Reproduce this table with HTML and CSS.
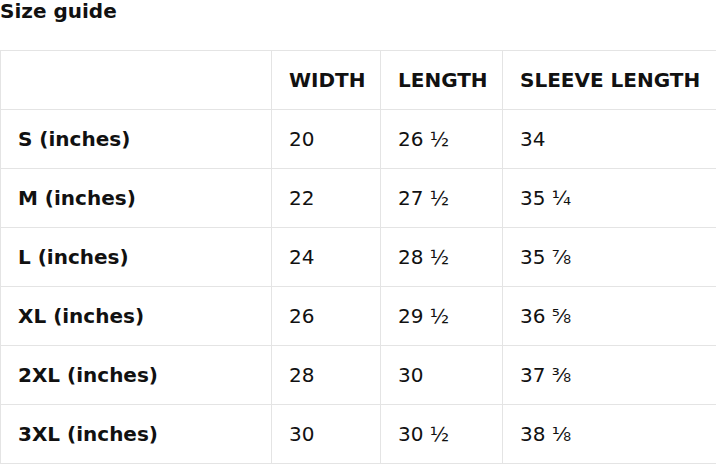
FILE: index.html
```html
<!DOCTYPE html>
<html>
<head>
<meta charset="utf-8">
<link rel="stylesheet" href="styles.css">
</head>
<body>
<h2 class="title">Size guide</h2>
<table class="sizes">
  <colgroup>
    <col class="c1"><col class="c2"><col class="c3"><col class="c4">
  </colgroup>
  <thead>
    <tr><th></th><th>WIDTH</th><th>LENGTH</th><th>SLEEVE LENGTH</th></tr>
  </thead>
  <tbody>
    <tr><th>S (inches)</th><td>20</td><td>26 ½</td><td>34</td></tr>
    <tr><th>M (inches)</th><td>22</td><td>27 ½</td><td>35 ¼</td></tr>
    <tr><th>L (inches)</th><td>24</td><td>28 ½</td><td>35 ⅞</td></tr>
    <tr><th>XL (inches)</th><td>26</td><td>29 ½</td><td>36 ⅝</td></tr>
    <tr><th>2XL (inches)</th><td>28</td><td>30</td><td>37 ⅜</td></tr>
    <tr><th>3XL (inches)</th><td>30</td><td>30 ½</td><td>38 ⅛</td></tr>
  </tbody>
</table>
</body>
</html>
```
FILE: styles.css
```css
html, body {
  margin: 0;
  padding: 0;
  background: #fff;
}
body {
  font-family: "DejaVu Sans", sans-serif;
  color: #111;
}
.title {
  margin: 0;
  font-size: 20px;
  font-weight: bold;
  line-height: 22px;
  height: 50px;
}
.sizes {
  border-collapse: collapse;
  width: 716px;
  table-layout: fixed;
}
.c1 { width: 271px; }
.c2 { width: 109px; }
.c3 { width: 122px; }
.c4 { width: 214px; }
.sizes th, .sizes td {
  border: 1px solid #e4e4e4;
  height: 59px;
  padding: 0 0 0 17px;
  text-align: left;
  font-size: 20px;
  box-sizing: border-box;
}
.sizes th { font-weight: bold; }
.sizes td { font-weight: normal; }
```
